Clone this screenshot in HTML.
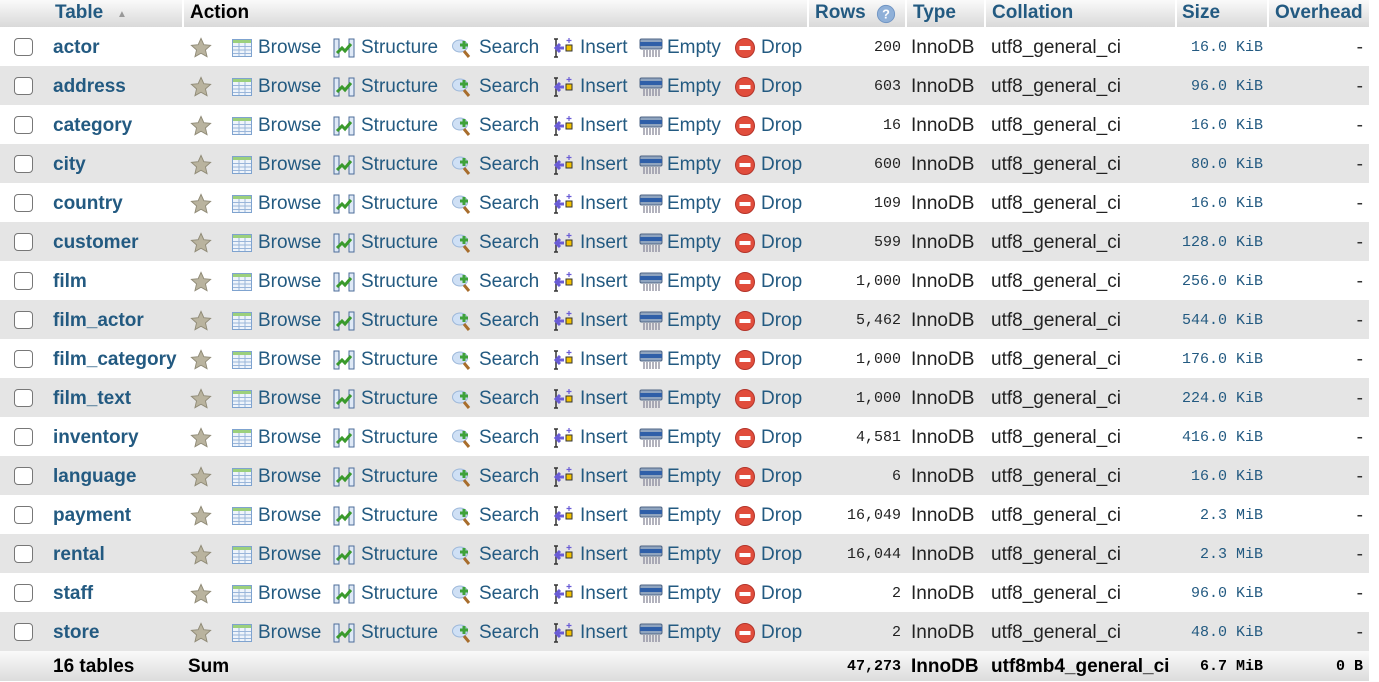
<!DOCTYPE html>
<html><head><meta charset="utf-8">
<style>
*{margin:0;padding:0;box-sizing:border-box}
body{width:1379px;height:682px;background:#fff;font-family:"Liberation Sans",Arial,sans-serif;font-size:19px;color:#222;position:relative;overflow:hidden}
.r{position:absolute;left:0;width:1369px;height:39px}
.r.o{background:#fff}.r.e{background:#e5e5e5}
.r>*{position:absolute;top:1px;line-height:39px;white-space:nowrap}
.cb{left:14px;top:11px!important;width:19px;height:18px;border:1.5px solid #777;border-radius:4px;background:#fff}
.n{left:53px;font-weight:bold;color:#235a81}
a{color:#235a81;text-decoration:none}
.i{top:10px!important;width:22px;height:22px}
.num{font-family:"Liberation Mono",monospace;font-size:15px;color:#222;text-align:right}
.rows{left:820px;width:81px}
.ty{left:911px;color:#222}
.co{left:991px;color:#222}
.sz{left:1160px;width:103px;color:#235a81}
.ov{left:1340px;width:23px;text-align:right;color:#333}
.hd{position:absolute;left:0;top:0;width:1369px;height:27px;background:linear-gradient(#fafafa,#d9d9d9)}
.hd span{position:absolute;top:0;line-height:25px;font-weight:bold;color:#235a81}
.sep{position:absolute;top:0;width:2px;height:27px;background:#fff}
.ft{position:absolute;left:0;top:651px;width:1369px;height:30px;background:linear-gradient(#fafafa,#dcdcdc)}
.ft>*{position:absolute;top:1px;line-height:29px;font-weight:bold;color:#000;white-space:nowrap}
</style></head><body>
<svg width="0" height="0" style="position:absolute">
<defs>
<symbol id="star" viewBox="0 0 24 24"><path d="M12 1.5l3.1 6.9 7.4.7-5.6 5 1.7 7.4L12 17.7l-6.6 3.8 1.7-7.4-5.6-5 7.4-.7z" fill="#b9b39e" stroke="#8f8a76" stroke-width="1"/></symbol>
<symbol id="br" viewBox="0 0 22 22"><rect x="1.5" y="2.5" width="19" height="17" fill="#eef4fb" stroke="#7fa3cf"/><rect x="2" y="3" width="18" height="3" fill="#9cd07c"/><path d="M2 9.5h18M2 13h18M2 16.5h18M8 6v13M14 6v13" stroke="#9ab6da" stroke-width="1"/></symbol>
<symbol id="st" viewBox="0 0 22 22"><rect x="1" y="2" width="5" height="18" fill="#dfe9f6" stroke="#4d6d9a"/><rect x="16" y="2" width="5" height="18" fill="#dfe9f6" stroke="#4d6d9a"/><path d="M4 16l5-5 3 3 6-7" stroke="#3a9a2c" stroke-width="3" fill="none"/></symbol>
<symbol id="se" viewBox="0 0 22 22"><ellipse cx="9" cy="9" rx="7.5" ry="6" fill="#cfe0f5" stroke="#9cb7d9"/><path d="M13 14l5 6" stroke="#a86d2c" stroke-width="3"/><path d="M13 4v8M9 8h8" stroke="#3fa23a" stroke-width="3"/></symbol>
<symbol id="in" viewBox="0 0 22 22"><path d="M2 2h4M2 20h4M4 2v18" stroke="#333" stroke-width="1.5"/><path d="M5 11h7M8 7l-4 4 4 4" stroke="#6a5cd6" stroke-width="3" fill="none"/><rect x="14" y="8" width="6" height="6" fill="#f2c200" stroke="#333"/><path d="M17 1v5M14.5 3.5h5" stroke="#6a5cd6" stroke-width="1.2"/></symbol>
<symbol id="em" viewBox="0 0 24 22"><rect x="1" y="2" width="22" height="10" rx="1.5" fill="#8fa4bf" stroke="#4f6584"/><rect x="1" y="5" width="22" height="4" fill="#2f5fa8"/><path d="M5 13v7M8 13v7M11 13v7M14 13v7M17 13v7M20 13v7" stroke="#889" stroke-width="1.3"/></symbol>
<symbol id="dr" viewBox="0 0 22 22"><circle cx="11" cy="11" r="9.5" fill="#e14d3c" stroke="#b3342a"/><rect x="5.5" y="9" width="11" height="4" fill="#fff"/></symbol>
<symbol id="q" viewBox="0 0 22 22"><circle cx="11" cy="11" r="9.5" fill="#8fb0d8" stroke="#6f94c3"/><text x="11" y="16" font-size="14" font-weight="bold" text-anchor="middle" fill="#fff" font-family="Liberation Sans">?</text></symbol>
</defs></svg>

<div class="hd">
<span style="left:55px">Table</span><span style="left:117px;top:2px;font-size:10px;color:#999">▲</span>
<div class="sep" style="left:182px"></div>
<span style="left:190px;color:#000">Action</span>
<div class="sep" style="left:807px"></div>
<span style="left:815px">Rows</span><svg style="position:absolute;left:876px;top:4px;width:20px;height:20px"><use href="#q"/></svg>
<div class="sep" style="left:905px"></div>
<span style="left:913px">Type</span>
<div class="sep" style="left:984px"></div>
<span style="left:992px">Collation</span>
<div class="sep" style="left:1175px"></div>
<span style="left:1182px">Size</span>
<div class="sep" style="left:1267px"></div>
<span style="left:1275px">Overhead</span>
</div>

<div class="r o" style="top:27px"><div class="cb"></div><span class="n">actor</span><svg class="i" style="left:189px;width:24px"><use href="#star"/></svg><svg class="i" style="left:231px"><use href="#br"/></svg><a style="left:258px">Browse</a><svg class="i" style="left:333px"><use href="#st"/></svg><a style="left:361px">Structure</a><svg class="i" style="left:451px"><use href="#se"/></svg><a style="left:479px">Search</a><svg class="i" style="left:552px"><use href="#in"/></svg><a style="left:580px">Insert</a><svg class="i" style="left:639px;width:24px"><use href="#em"/></svg><a style="left:667px">Empty</a><svg class="i" style="left:734px"><use href="#dr"/></svg><a style="left:761px">Drop</a><span class="num rows">200</span><span class="ty">InnoDB</span><span class="co">utf8_general_ci</span><span class="num sz">16.0 KiB</span><span class="ov">-</span></div>
<div class="r e" style="top:66px"><div class="cb"></div><span class="n">address</span><svg class="i" style="left:189px;width:24px"><use href="#star"/></svg><svg class="i" style="left:231px"><use href="#br"/></svg><a style="left:258px">Browse</a><svg class="i" style="left:333px"><use href="#st"/></svg><a style="left:361px">Structure</a><svg class="i" style="left:451px"><use href="#se"/></svg><a style="left:479px">Search</a><svg class="i" style="left:552px"><use href="#in"/></svg><a style="left:580px">Insert</a><svg class="i" style="left:639px;width:24px"><use href="#em"/></svg><a style="left:667px">Empty</a><svg class="i" style="left:734px"><use href="#dr"/></svg><a style="left:761px">Drop</a><span class="num rows">603</span><span class="ty">InnoDB</span><span class="co">utf8_general_ci</span><span class="num sz">96.0 KiB</span><span class="ov">-</span></div>
<div class="r o" style="top:105px"><div class="cb"></div><span class="n">category</span><svg class="i" style="left:189px;width:24px"><use href="#star"/></svg><svg class="i" style="left:231px"><use href="#br"/></svg><a style="left:258px">Browse</a><svg class="i" style="left:333px"><use href="#st"/></svg><a style="left:361px">Structure</a><svg class="i" style="left:451px"><use href="#se"/></svg><a style="left:479px">Search</a><svg class="i" style="left:552px"><use href="#in"/></svg><a style="left:580px">Insert</a><svg class="i" style="left:639px;width:24px"><use href="#em"/></svg><a style="left:667px">Empty</a><svg class="i" style="left:734px"><use href="#dr"/></svg><a style="left:761px">Drop</a><span class="num rows">16</span><span class="ty">InnoDB</span><span class="co">utf8_general_ci</span><span class="num sz">16.0 KiB</span><span class="ov">-</span></div>
<div class="r e" style="top:144px"><div class="cb"></div><span class="n">city</span><svg class="i" style="left:189px;width:24px"><use href="#star"/></svg><svg class="i" style="left:231px"><use href="#br"/></svg><a style="left:258px">Browse</a><svg class="i" style="left:333px"><use href="#st"/></svg><a style="left:361px">Structure</a><svg class="i" style="left:451px"><use href="#se"/></svg><a style="left:479px">Search</a><svg class="i" style="left:552px"><use href="#in"/></svg><a style="left:580px">Insert</a><svg class="i" style="left:639px;width:24px"><use href="#em"/></svg><a style="left:667px">Empty</a><svg class="i" style="left:734px"><use href="#dr"/></svg><a style="left:761px">Drop</a><span class="num rows">600</span><span class="ty">InnoDB</span><span class="co">utf8_general_ci</span><span class="num sz">80.0 KiB</span><span class="ov">-</span></div>
<div class="r o" style="top:183px"><div class="cb"></div><span class="n">country</span><svg class="i" style="left:189px;width:24px"><use href="#star"/></svg><svg class="i" style="left:231px"><use href="#br"/></svg><a style="left:258px">Browse</a><svg class="i" style="left:333px"><use href="#st"/></svg><a style="left:361px">Structure</a><svg class="i" style="left:451px"><use href="#se"/></svg><a style="left:479px">Search</a><svg class="i" style="left:552px"><use href="#in"/></svg><a style="left:580px">Insert</a><svg class="i" style="left:639px;width:24px"><use href="#em"/></svg><a style="left:667px">Empty</a><svg class="i" style="left:734px"><use href="#dr"/></svg><a style="left:761px">Drop</a><span class="num rows">109</span><span class="ty">InnoDB</span><span class="co">utf8_general_ci</span><span class="num sz">16.0 KiB</span><span class="ov">-</span></div>
<div class="r e" style="top:222px"><div class="cb"></div><span class="n">customer</span><svg class="i" style="left:189px;width:24px"><use href="#star"/></svg><svg class="i" style="left:231px"><use href="#br"/></svg><a style="left:258px">Browse</a><svg class="i" style="left:333px"><use href="#st"/></svg><a style="left:361px">Structure</a><svg class="i" style="left:451px"><use href="#se"/></svg><a style="left:479px">Search</a><svg class="i" style="left:552px"><use href="#in"/></svg><a style="left:580px">Insert</a><svg class="i" style="left:639px;width:24px"><use href="#em"/></svg><a style="left:667px">Empty</a><svg class="i" style="left:734px"><use href="#dr"/></svg><a style="left:761px">Drop</a><span class="num rows">599</span><span class="ty">InnoDB</span><span class="co">utf8_general_ci</span><span class="num sz">128.0 KiB</span><span class="ov">-</span></div>
<div class="r o" style="top:261px"><div class="cb"></div><span class="n">film</span><svg class="i" style="left:189px;width:24px"><use href="#star"/></svg><svg class="i" style="left:231px"><use href="#br"/></svg><a style="left:258px">Browse</a><svg class="i" style="left:333px"><use href="#st"/></svg><a style="left:361px">Structure</a><svg class="i" style="left:451px"><use href="#se"/></svg><a style="left:479px">Search</a><svg class="i" style="left:552px"><use href="#in"/></svg><a style="left:580px">Insert</a><svg class="i" style="left:639px;width:24px"><use href="#em"/></svg><a style="left:667px">Empty</a><svg class="i" style="left:734px"><use href="#dr"/></svg><a style="left:761px">Drop</a><span class="num rows">1,000</span><span class="ty">InnoDB</span><span class="co">utf8_general_ci</span><span class="num sz">256.0 KiB</span><span class="ov">-</span></div>
<div class="r e" style="top:300px"><div class="cb"></div><span class="n">film_actor</span><svg class="i" style="left:189px;width:24px"><use href="#star"/></svg><svg class="i" style="left:231px"><use href="#br"/></svg><a style="left:258px">Browse</a><svg class="i" style="left:333px"><use href="#st"/></svg><a style="left:361px">Structure</a><svg class="i" style="left:451px"><use href="#se"/></svg><a style="left:479px">Search</a><svg class="i" style="left:552px"><use href="#in"/></svg><a style="left:580px">Insert</a><svg class="i" style="left:639px;width:24px"><use href="#em"/></svg><a style="left:667px">Empty</a><svg class="i" style="left:734px"><use href="#dr"/></svg><a style="left:761px">Drop</a><span class="num rows">5,462</span><span class="ty">InnoDB</span><span class="co">utf8_general_ci</span><span class="num sz">544.0 KiB</span><span class="ov">-</span></div>
<div class="r o" style="top:339px"><div class="cb"></div><span class="n">film_category</span><svg class="i" style="left:189px;width:24px"><use href="#star"/></svg><svg class="i" style="left:231px"><use href="#br"/></svg><a style="left:258px">Browse</a><svg class="i" style="left:333px"><use href="#st"/></svg><a style="left:361px">Structure</a><svg class="i" style="left:451px"><use href="#se"/></svg><a style="left:479px">Search</a><svg class="i" style="left:552px"><use href="#in"/></svg><a style="left:580px">Insert</a><svg class="i" style="left:639px;width:24px"><use href="#em"/></svg><a style="left:667px">Empty</a><svg class="i" style="left:734px"><use href="#dr"/></svg><a style="left:761px">Drop</a><span class="num rows">1,000</span><span class="ty">InnoDB</span><span class="co">utf8_general_ci</span><span class="num sz">176.0 KiB</span><span class="ov">-</span></div>
<div class="r e" style="top:378px"><div class="cb"></div><span class="n">film_text</span><svg class="i" style="left:189px;width:24px"><use href="#star"/></svg><svg class="i" style="left:231px"><use href="#br"/></svg><a style="left:258px">Browse</a><svg class="i" style="left:333px"><use href="#st"/></svg><a style="left:361px">Structure</a><svg class="i" style="left:451px"><use href="#se"/></svg><a style="left:479px">Search</a><svg class="i" style="left:552px"><use href="#in"/></svg><a style="left:580px">Insert</a><svg class="i" style="left:639px;width:24px"><use href="#em"/></svg><a style="left:667px">Empty</a><svg class="i" style="left:734px"><use href="#dr"/></svg><a style="left:761px">Drop</a><span class="num rows">1,000</span><span class="ty">InnoDB</span><span class="co">utf8_general_ci</span><span class="num sz">224.0 KiB</span><span class="ov">-</span></div>
<div class="r o" style="top:417px"><div class="cb"></div><span class="n">inventory</span><svg class="i" style="left:189px;width:24px"><use href="#star"/></svg><svg class="i" style="left:231px"><use href="#br"/></svg><a style="left:258px">Browse</a><svg class="i" style="left:333px"><use href="#st"/></svg><a style="left:361px">Structure</a><svg class="i" style="left:451px"><use href="#se"/></svg><a style="left:479px">Search</a><svg class="i" style="left:552px"><use href="#in"/></svg><a style="left:580px">Insert</a><svg class="i" style="left:639px;width:24px"><use href="#em"/></svg><a style="left:667px">Empty</a><svg class="i" style="left:734px"><use href="#dr"/></svg><a style="left:761px">Drop</a><span class="num rows">4,581</span><span class="ty">InnoDB</span><span class="co">utf8_general_ci</span><span class="num sz">416.0 KiB</span><span class="ov">-</span></div>
<div class="r e" style="top:456px"><div class="cb"></div><span class="n">language</span><svg class="i" style="left:189px;width:24px"><use href="#star"/></svg><svg class="i" style="left:231px"><use href="#br"/></svg><a style="left:258px">Browse</a><svg class="i" style="left:333px"><use href="#st"/></svg><a style="left:361px">Structure</a><svg class="i" style="left:451px"><use href="#se"/></svg><a style="left:479px">Search</a><svg class="i" style="left:552px"><use href="#in"/></svg><a style="left:580px">Insert</a><svg class="i" style="left:639px;width:24px"><use href="#em"/></svg><a style="left:667px">Empty</a><svg class="i" style="left:734px"><use href="#dr"/></svg><a style="left:761px">Drop</a><span class="num rows">6</span><span class="ty">InnoDB</span><span class="co">utf8_general_ci</span><span class="num sz">16.0 KiB</span><span class="ov">-</span></div>
<div class="r o" style="top:495px"><div class="cb"></div><span class="n">payment</span><svg class="i" style="left:189px;width:24px"><use href="#star"/></svg><svg class="i" style="left:231px"><use href="#br"/></svg><a style="left:258px">Browse</a><svg class="i" style="left:333px"><use href="#st"/></svg><a style="left:361px">Structure</a><svg class="i" style="left:451px"><use href="#se"/></svg><a style="left:479px">Search</a><svg class="i" style="left:552px"><use href="#in"/></svg><a style="left:580px">Insert</a><svg class="i" style="left:639px;width:24px"><use href="#em"/></svg><a style="left:667px">Empty</a><svg class="i" style="left:734px"><use href="#dr"/></svg><a style="left:761px">Drop</a><span class="num rows">16,049</span><span class="ty">InnoDB</span><span class="co">utf8_general_ci</span><span class="num sz">2.3 MiB</span><span class="ov">-</span></div>
<div class="r e" style="top:534px"><div class="cb"></div><span class="n">rental</span><svg class="i" style="left:189px;width:24px"><use href="#star"/></svg><svg class="i" style="left:231px"><use href="#br"/></svg><a style="left:258px">Browse</a><svg class="i" style="left:333px"><use href="#st"/></svg><a style="left:361px">Structure</a><svg class="i" style="left:451px"><use href="#se"/></svg><a style="left:479px">Search</a><svg class="i" style="left:552px"><use href="#in"/></svg><a style="left:580px">Insert</a><svg class="i" style="left:639px;width:24px"><use href="#em"/></svg><a style="left:667px">Empty</a><svg class="i" style="left:734px"><use href="#dr"/></svg><a style="left:761px">Drop</a><span class="num rows">16,044</span><span class="ty">InnoDB</span><span class="co">utf8_general_ci</span><span class="num sz">2.3 MiB</span><span class="ov">-</span></div>
<div class="r o" style="top:573px"><div class="cb"></div><span class="n">staff</span><svg class="i" style="left:189px;width:24px"><use href="#star"/></svg><svg class="i" style="left:231px"><use href="#br"/></svg><a style="left:258px">Browse</a><svg class="i" style="left:333px"><use href="#st"/></svg><a style="left:361px">Structure</a><svg class="i" style="left:451px"><use href="#se"/></svg><a style="left:479px">Search</a><svg class="i" style="left:552px"><use href="#in"/></svg><a style="left:580px">Insert</a><svg class="i" style="left:639px;width:24px"><use href="#em"/></svg><a style="left:667px">Empty</a><svg class="i" style="left:734px"><use href="#dr"/></svg><a style="left:761px">Drop</a><span class="num rows">2</span><span class="ty">InnoDB</span><span class="co">utf8_general_ci</span><span class="num sz">96.0 KiB</span><span class="ov">-</span></div>
<div class="r e" style="top:612px"><div class="cb"></div><span class="n">store</span><svg class="i" style="left:189px;width:24px"><use href="#star"/></svg><svg class="i" style="left:231px"><use href="#br"/></svg><a style="left:258px">Browse</a><svg class="i" style="left:333px"><use href="#st"/></svg><a style="left:361px">Structure</a><svg class="i" style="left:451px"><use href="#se"/></svg><a style="left:479px">Search</a><svg class="i" style="left:552px"><use href="#in"/></svg><a style="left:580px">Insert</a><svg class="i" style="left:639px;width:24px"><use href="#em"/></svg><a style="left:667px">Empty</a><svg class="i" style="left:734px"><use href="#dr"/></svg><a style="left:761px">Drop</a><span class="num rows">2</span><span class="ty">InnoDB</span><span class="co">utf8_general_ci</span><span class="num sz">48.0 KiB</span><span class="ov">-</span></div>

<div class="ft">
<span style="left:53px">16 tables</span>
<span style="left:188px">Sum</span>
<span class="num" style="left:820px;width:81px;text-align:right;color:#000">47,273</span>
<span style="left:911px">InnoDB</span>
<span style="left:991px">utf8mb4_general_ci</span>
<span class="num" style="left:1160px;width:103px;text-align:right;color:#000">6.7 MiB</span>
<span class="num" style="left:1300px;width:63px;text-align:right;color:#000">0 B</span>
</div>
</body></html>
